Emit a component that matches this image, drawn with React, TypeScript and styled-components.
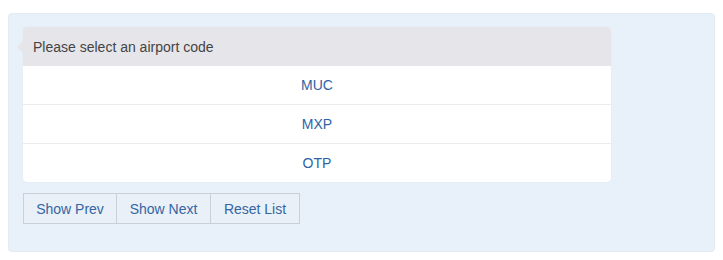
import React from "react";
import styled, { createGlobalStyle } from "styled-components";

const Global = createGlobalStyle`
  html, body { margin: 0; padding: 0; background: #fff; }
  body { font-family: "Liberation Sans", Arial, sans-serif; }
`;

const Page = styled.div`
  padding: 13px 8px 0 8px;
`;

const Panel = styled.div`
  width: 707px;
  box-sizing: border-box;
  background: #e8f1fa;
  border: 1px solid #e2eaf2;
  border-radius: 4px;
  padding: 13px 14px 27px 14px;
`;

const Card = styled.div`
  position: relative;
  width: 588px;
  background: #fff;
  border-radius: 4px;
  box-shadow: 0 0 1px rgba(0, 0, 0, 0.12);
`;

const Header = styled.div`
  position: relative;
  height: 39px;
  display: flex;
  align-items: center;
  padding-left: 10px;
  background: #e6e5ea;
  border-radius: 4px 4px 0 0;
  color: #444;
  font-size: 14px;
  &::before {
    content: "";
    position: absolute;
    left: -6px;
    top: 14px;
    width: 0;
    height: 0;
    border-top: 6px solid transparent;
    border-bottom: 6px solid transparent;
    border-right: 6px solid #e6e5ea;
  }
`;

const Row = styled.div<{ $first?: boolean }>`
  height: 38px;
  display: flex;
  align-items: center;
  justify-content: center;
  color: #2f63a4;
  font-size: 14px;
  border-top: ${(p) => (p.$first ? "none" : "1px solid #ececef")};
`;

const Buttons = styled.div`
  display: flex;
  margin-top: 11px;
`;

const Button = styled.button<{ $w: number }>`
  width: ${(p) => p.$w}px;
  height: 31px;
  padding: 0 12px;
  background: #e9f0f7;
  border: 1px solid #c8d1da;
  margin-left: -1px;
  color: #3565a3;
  font-family: "Liberation Sans", Arial, sans-serif;
  font-size: 14px;
  cursor: pointer;
  &:first-child { margin-left: 0; }
`;

const codes = ["MUC", "MXP", "OTP"];

export default function App() {
  return (
    <>
      <Global />
      <Page>
        <Panel>
          <Card>
            <Header>Please select an airport code</Header>
            {codes.map((c, i) => (
              <Row key={c} $first={i === 0}>
                {c}
              </Row>
            ))}
          </Card>
          <Buttons>
            <Button $w={94}>Show Prev</Button>
            <Button $w={95}>Show Next</Button>
            <Button $w={90}>Reset List</Button>
          </Buttons>
        </Panel>
      </Page>
    </>
  );
}
